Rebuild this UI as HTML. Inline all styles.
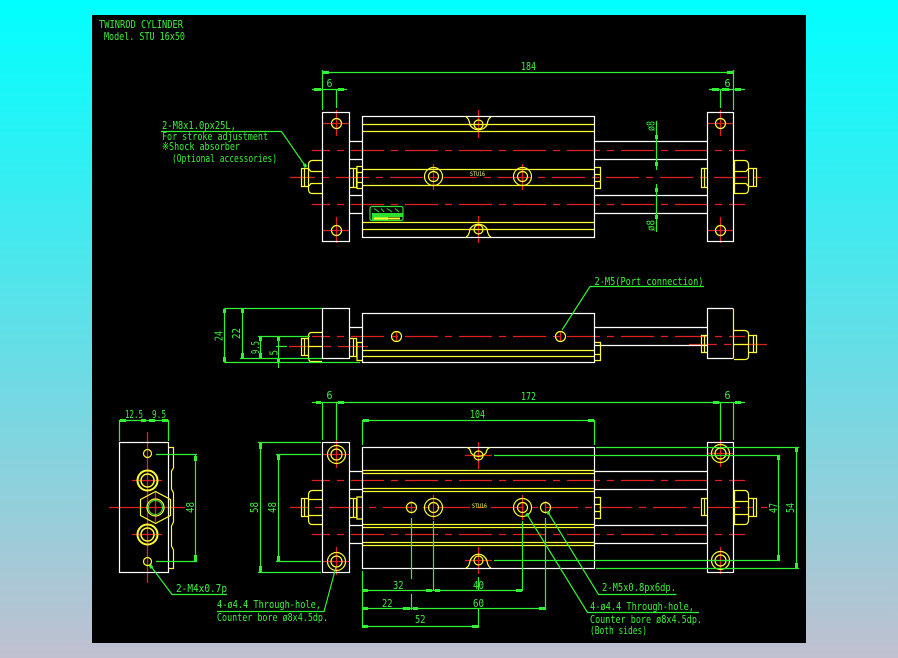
<!DOCTYPE html>
<html>
<head>
<meta charset="utf-8">
<title>Twinrod Cylinder</title>
<style>
html,body{margin:0;padding:0;width:898px;height:658px;overflow:hidden;background:linear-gradient(180deg,#00ffff 0%,#c0c0d0 100%)}
svg{position:absolute;left:0;top:0;display:block}
text{font-family:"DejaVu Sans Mono","Liberation Mono",monospace;font-size:10.5px;fill:#3cf03c}
</style>
</head>
<body>
<svg width="898" height="658" viewBox="0 0 898 658" fill="none">
<rect x="92" y="15" width="714" height="628" fill="#000"/>

<!-- RED CENTRE LINES -->
<g stroke="#e02020" stroke-width="1.3">
<path stroke-dasharray="33 7 7 7" stroke-dashoffset="15" d="M312 150.5H745M312 204.5H745M297 177.5H767"/>
<path d="M290 177.5H297"/>
<path d="M322 123.5H350M336.5 110V136M322 230.5H350M336.5 217V243M707 123.5H734M720.5 110V136M707 230.5H734M720.5 217V243"/>
<path d="M468 124.5H489M478.5 110V138M468 229.5H489M478.5 216V243M433.5 164V190M522.5 164V190"/>
<path stroke-dasharray="33 7 7 7" stroke-dashoffset="15" d="M312 336.5H745"/>
<path stroke-dasharray="33 7 7 7" stroke-dashoffset="5" d="M289 346.5H368M689 344.5H767"/>
<path d="M396.5 331V342M560.5 331V342"/>
<path stroke-dasharray="33 7 7 7" stroke-dashoffset="15" d="M312 480.5H745M312 534.5H745M290 507.5H767"/>
<path d="M322 454.5H350M336.5 440V468M322 561.5H350M336.5 547V575M707 453.5H734M720.5 440V467M707 560.5H734M720.5 547V574"/>
<path d="M465 455.5H492M478.5 442V469M465 560.5H492M478.5 547V574M433.5 495V520M522.5 495V520M411.5 501V514M545.5 501V514"/>
<path d="M109 507.5H185M147.5 432V583M132 480.5H162M132 534.5H162M155.5 492V522"/>
</g>

<!-- WHITE OUTLINES -->
<g stroke="#fff" stroke-width="1.2">
<rect x="322.5" y="112.5" width="27" height="129"/>
<rect x="707.5" y="112.5" width="26" height="129"/>
<rect x="362.5" y="116.5" width="232" height="121"/>
<path d="M350 141.5H362M350 159.5H362M350 195.5H362M350 213.5H362M595 141.5H707M595 159.5H707M595 195.5H707M595 213.5H707"/>
<rect x="322.5" y="308.5" width="27" height="50"/>
<rect x="362.5" y="313.5" width="232" height="49"/>
<path d="M350 327.5H362M595 327.5H707M595 345.5H707"/>
<path d="M733.5 308.5H707.5V358.5H733.5"/>
<rect x="322.5" y="442.5" width="27" height="130"/>
<rect x="707.5" y="442.5" width="26" height="130"/>
<rect x="362.5" y="447.5" width="232" height="121"/>
<path d="M350 471.5H362M350 489.5H362M350 525.5H362M350 543.5H362M595 471.5H707M595 489.5H707M595 525.5H707M595 543.5H707"/>
<rect x="119.5" y="442.5" width="49" height="130"/>
</g>

<!-- YELLOW -->
<g stroke="#ffff30" stroke-width="1.2">
<path d="M363 124.5H594M363 131.5H594M363 169.5H594M363 185.5H594M363 222.5H594M363 229.5H594"/>
<circle cx="336.5" cy="123.5" r="5"/><circle cx="336.5" cy="230.5" r="5"/>
<circle cx="720.5" cy="123.5" r="5"/><circle cx="720.5" cy="230.5" r="5"/>
<circle cx="478.5" cy="124.5" r="4.5"/><circle cx="478.5" cy="229.5" r="4.5"/>
<circle cx="433.5" cy="176.5" r="9"/><circle cx="433.5" cy="176.5" r="5"/>
<circle cx="522.5" cy="176.5" r="9"/><circle cx="522.5" cy="176.5" r="5"/>
<path d="M466 117Q469 118 470 125A10 10 0 0 0 487 125Q488 118 491 117"/>
<path d="M466 237Q469 236 470 229A10 10 0 0 1 487 229Q488 236 491 237"/>
<path d="M322 160.5H312Q308.5 161 308.5 165V189Q308.5 193.5 312 193.5H322M308.5 168.5H301.5V186.5H308.5M304.5 168.5V186.5M308.5 168.5L311 171.5H322M308.5 186.5L311 183.5H322"/>
<path d="M350 168.5H356.5V187.5H350M353.5 168.5V187.5M362 166.5H357V188.5H362M357 172.5H362M357 182.5H362"/>
<path d="M595 167.5H600.5V188.5H595M595 174.5H600.5M595 181.5H600.5"/>
<path d="M707 168.5H701.5V187.5H707M704.5 168.5V187.5"/>
<path d="M734 160.5H745Q748.5 161 748.5 165V189Q748.5 193.5 745 193.5H734M748.5 168.5H756.5V186.5H748.5M753.5 168.5V186.5M734 171.5H746L748.5 168.5M734 183.5H746L748.5 186.5M734.5 160V194"/>

<path d="M363 350.5H594M363 356.5H594"/>
<circle cx="396.5" cy="336.5" r="5"/><circle cx="560.5" cy="336.5" r="5"/>
<path d="M322 332.5H311Q308.5 333 308.5 336V357Q308.5 361.5 311 361.5H322M308.5 338.5H301.5V355.5H308.5M304.5 338.5V355.5M309 346.5H322"/>
<path d="M350 338.5H356.5V356.5H350M353.5 338.5V356.5M362 342.5H357V360.5H362"/>
<path d="M595 342.5H600.5V360.5H595M595 354.5H600.5"/>
<path d="M707 335.5H701.5V352.5H707M704.5 335.5V352.5"/>
<path d="M734 330.5H745Q748.5 331 748.5 334V356Q748.5 359.5 745 359.5H734M748.5 335.5H756.5V352.5H748.5M753.5 335.5V352.5M734 344.5H748M733.5 309V358"/>

<path d="M363 470.5H594M363 473.5H594M363 488.5H594M363 491.5H594M363 524.5H594M363 527.5H594M363 542.5H594M363 545.5H594"/>
<circle cx="336.5" cy="454.5" r="9"/><circle cx="336.5" cy="454.5" r="5.5"/>
<circle cx="336.5" cy="561.5" r="9"/><circle cx="336.5" cy="561.5" r="5.5"/>
<circle cx="720.5" cy="453.5" r="9"/><circle cx="720.5" cy="453.5" r="5.5"/>
<circle cx="720.5" cy="560.5" r="9"/><circle cx="720.5" cy="560.5" r="5.5"/>
<circle cx="478.5" cy="455.5" r="4.5"/><circle cx="478.5" cy="560.5" r="4.5"/>
<circle cx="433.5" cy="507.5" r="9"/><circle cx="433.5" cy="507.5" r="5"/>
<circle cx="522.5" cy="507.5" r="9"/><circle cx="522.5" cy="507.5" r="5"/>
<circle cx="411.5" cy="507.5" r="5"/><circle cx="545.5" cy="507.5" r="5"/>
<path d="M467 447.5Q470 448 471 453A10 10 0 0 0 486 453Q487 448 490 447.5"/>
<path d="M466 568Q469 567 470 561A9 10 0 0 1 487 561Q488 567 491 568"/>
<path d="M322 490.5H312Q308.5 491 308.5 495V520Q308.5 524.5 312 524.5H322M308.5 498.5H301.5V516.5H308.5M304.5 498.5V516.5M309 499.5H322M309 515.5H322"/>
<path d="M350 498.5H356.5V517.5H350M353.5 498.5V517.5M362 497H357V519H362"/>
<path d="M595 497.5H600.5V518.5H595M595 504.5H600.5M595 511.5H600.5"/>
<path d="M707 498.5H701.5V515.5H707M704.5 498.5V515.5"/>
<path d="M734 490.5H745Q748.5 491 748.5 495V520Q748.5 524.5 745 524.5H734M748.5 498.5H756.5V516.5H748.5M753.5 498.5V516.5M734 501.5H748M734 514.5H748M734.5 490V524"/>

<circle cx="147.5" cy="453.5" r="4"/><circle cx="147.5" cy="561.5" r="4"/>
<circle cx="147.5" cy="480.5" r="10" stroke-width="2"/><circle cx="147.5" cy="480.5" r="6.5" stroke-width="1.5"/>
<circle cx="147.5" cy="534.5" r="10" stroke-width="2"/><circle cx="147.5" cy="534.5" r="6.5" stroke-width="1.5"/>
<path d="M155.5 491.5L170.5 499.5V515.5L155.5 523.5L140.5 515.5V499.5Z"/>
<circle cx="155.5" cy="507.5" r="8.5"/>
<path d="M169 447.5H173.5V468L171.5 471V489L173.5 493V522L171.5 526V546L173.5 550V568.5H169"/>
</g>
<circle cx="155.5" cy="507.5" r="7" stroke="#3ce83c" stroke-width="1"/>

<!-- LOGO -->
<rect x="370" y="206.5" width="33" height="14" rx="2" stroke="#2ee02e" stroke-width="1.2"/>
<path d="M372 213H403V217H388V220H372Z" fill="#2ee02e"/>
<path d="M374 208.5L379 212M381 208.5L384 212M387 208.5L392 212M395 208.5L399 212" stroke="#2ee02e" stroke-width="1"/>
<path d="M374 218.5H400" stroke="#ffff30" stroke-width="2"/>

<!-- GREEN DIM LINES -->
<g stroke="#32f032" stroke-width="1.2">
<path d="M322.5 72.5H733.5M322.5 70V110M733.5 70V110M336.5 90V108M720.5 90V108M312 89.5H347M709 89.5H745"/>
<path d="M656.5 121V170M656.5 184V232"/>
<path d="M161 131.5H281.5L306 167"/>
<path d="M224.5 308.5H322M224.5 362.5H360M224.5 308.5V362.5M242.5 308.5V358.5M240 358.5H322M260.5 336.5V358.5M258 336.5H310M278.5 336.5V368M276 346.5H287"/>
<path d="M590 286.5H704M590 286.5L562 330"/>
<path d="M312 402.5H745M322.5 403V440M336.5 403V440M720.5 403V440M733.5 403V440"/>
<path d="M362.5 420.5H594.5M362.5 420V445M594.5 420V445"/>
<path d="M260.5 442.5V572.5M258 442.5H321M258 572.5H321M278.5 454.5V561.5M276 454.5H321M276 561.5H321"/>
<path d="M778.5 455.5V560.5M796.5 447.5V568.5M494 455.5H780M494 560.5H780M596 447.5H799M596 568.5H799"/>
<path d="M362.5 590.5H522.5M362.5 608.5H545.5M362.5 626.5H478.5M362.5 571V628M433.5 521V590M522.5 521V591M411.5 518V579M411.5 594V610M545.5 518V610M478.5 577V590M478.5 609V628"/>
<path d="M547.5 511.5L598.5 594.5H676.5"/>
<path d="M526.5 513.5L587.5 612.5H699"/>
<path d="M217 611.5H324L336 567"/>
<path d="M119.5 420.5H168.5M119.5 420V441M168.5 420V441M156 454.5H197M156 561.5H197M195.5 454.5V561.5"/>
<path d="M150 565L172 594.5H227"/>
</g>

<!-- ARROW TICKS -->
<g stroke="#32f032" stroke-width="3">
<path d="M323 72.5H329M727 72.5H733M314 89.5H321M338 89.5H344M712 89.5H719M722 89.5H729M735 89.5H741"/>
<path d="M656.5 135V139M656.5 162V166M656.5 188V192M656.5 215V219"/>
<path d="M224.5 309V313M224.5 357V362M242.5 309V313M242.5 353V358M260.5 337V341M260.5 353V358M278.5 337V341M278.5 358V363"/>
<path d="M316 402.5H321M338 402.5H344M713 402.5H719M735 402.5H741M363 420.5H369M588 420.5H594"/>
<path d="M260.5 443V449M260.5 566V572M278.5 455V460M278.5 556V561M778.5 456V460M778.5 555V560M796.5 448V452M796.5 563V568"/>
<path d="M363 590.5H368M426 590.5H432M435 590.5H440M516 590.5H522M363 608.5H368M403 608.5H410M413 608.5H418M539 608.5H545M363 626.5H368M472 626.5H478"/>
<path d="M120 420.5H126M141 420.5H146M149 420.5H155M162 420.5H168M195.5 456V461M195.5 555V561"/>
<path d="M304 164L306 167M547.5 511.5L549 514M526.5 513.5L528 516M150 565L152 568"/>
</g>

<!-- TEXT -->
<g>
<text lengthAdjust="spacingAndGlyphs" x="99" y="28" textLength="84">TWINROD CYLINDER</text>
<text lengthAdjust="spacingAndGlyphs" x="104" y="40" textLength="81">Model. STU 16x50</text>
<text lengthAdjust="spacingAndGlyphs" x="521" y="70" textLength="15">184</text>
<text lengthAdjust="spacingAndGlyphs" x="326.5" y="87" textLength="6">6</text>
<text lengthAdjust="spacingAndGlyphs" x="724.5" y="87" textLength="6">6</text>
<text lengthAdjust="spacingAndGlyphs" x="162" y="129" textLength="74">2-M8x1.0px25L,</text>
<text lengthAdjust="spacingAndGlyphs" x="162" y="140" textLength="106">For stroke adjustment</text>
<text lengthAdjust="spacingAndGlyphs" x="162" y="150" textLength="78">※Shock absorber</text>
<text lengthAdjust="spacingAndGlyphs" x="172" y="162" textLength="105">(Optional accessories)</text>
<text lengthAdjust="spacingAndGlyphs" transform="translate(654.5 131) rotate(-90)" textLength="10">ø8</text>
<text lengthAdjust="spacingAndGlyphs" transform="translate(654.5 231) rotate(-90)" textLength="11">ø8</text>
<text lengthAdjust="spacingAndGlyphs" transform="translate(222.5 341) rotate(-90)" textLength="10">24</text>
<text lengthAdjust="spacingAndGlyphs" transform="translate(240 339) rotate(-90)" textLength="11">22</text>
<text lengthAdjust="spacingAndGlyphs" transform="translate(259 354) rotate(-90)" textLength="13">9.5</text>
<text lengthAdjust="spacingAndGlyphs" transform="translate(277.5 355.5) rotate(-90)" textLength="5.5">5</text>
<text lengthAdjust="spacingAndGlyphs" x="594.5" y="285" textLength="109">2-M5(Port connection)</text>
<text lengthAdjust="spacingAndGlyphs" x="326.5" y="399" textLength="6">6</text>
<text lengthAdjust="spacingAndGlyphs" x="521" y="400" textLength="15">172</text>
<text lengthAdjust="spacingAndGlyphs" x="724.5" y="399" textLength="6">6</text>
<text lengthAdjust="spacingAndGlyphs" x="470" y="418" textLength="15">104</text>
<text lengthAdjust="spacingAndGlyphs" x="125" y="418" textLength="18">12.5</text>
<text lengthAdjust="spacingAndGlyphs" x="152" y="418" textLength="14">9.5</text>
<text lengthAdjust="spacingAndGlyphs" transform="translate(194 513) rotate(-90)" textLength="11">48</text>
<text lengthAdjust="spacingAndGlyphs" transform="translate(258 513) rotate(-90)" textLength="11">58</text>
<text lengthAdjust="spacingAndGlyphs" transform="translate(276 513) rotate(-90)" textLength="11">48</text>
<text lengthAdjust="spacingAndGlyphs" transform="translate(777 513) rotate(-90)" textLength="10">47</text>
<text lengthAdjust="spacingAndGlyphs" transform="translate(794 513) rotate(-90)" textLength="10">54</text>
<text lengthAdjust="spacingAndGlyphs" x="393" y="589" textLength="10.5">32</text>
<text lengthAdjust="spacingAndGlyphs" x="473" y="589" textLength="11">40</text>
<text lengthAdjust="spacingAndGlyphs" x="382" y="607" textLength="10.5">22</text>
<text lengthAdjust="spacingAndGlyphs" x="473" y="607" textLength="11">60</text>
<text lengthAdjust="spacingAndGlyphs" x="415" y="623" textLength="10.5">52</text>
<text lengthAdjust="spacingAndGlyphs" x="176" y="592" textLength="51">2-M4x0.7p</text>
<text lengthAdjust="spacingAndGlyphs" x="217" y="608" textLength="104">4-ø4.4 Through-hole,</text>
<text lengthAdjust="spacingAndGlyphs" x="217" y="621" textLength="111">Counter bore ø8x4.5dp.</text>
<text lengthAdjust="spacingAndGlyphs" x="602" y="591" textLength="74">2-M5x0.8px6dp.</text>
<text lengthAdjust="spacingAndGlyphs" x="590" y="610" textLength="104">4-ø4.4 Through-hole,</text>
<text lengthAdjust="spacingAndGlyphs" x="590" y="623" textLength="112">Counter bore ø8x4.5dp.</text>
<text lengthAdjust="spacingAndGlyphs" x="590" y="634" textLength="57">(Both sides)</text>
<text lengthAdjust="spacingAndGlyphs" x="470" y="176" textLength="15" style="font-size:6.5px;fill:#f4f480">STU16</text>
<text lengthAdjust="spacingAndGlyphs" x="472" y="508" textLength="15" style="font-size:6.5px;fill:#ffff30">STU16</text>
</g>
</svg>
</body>
</html>
